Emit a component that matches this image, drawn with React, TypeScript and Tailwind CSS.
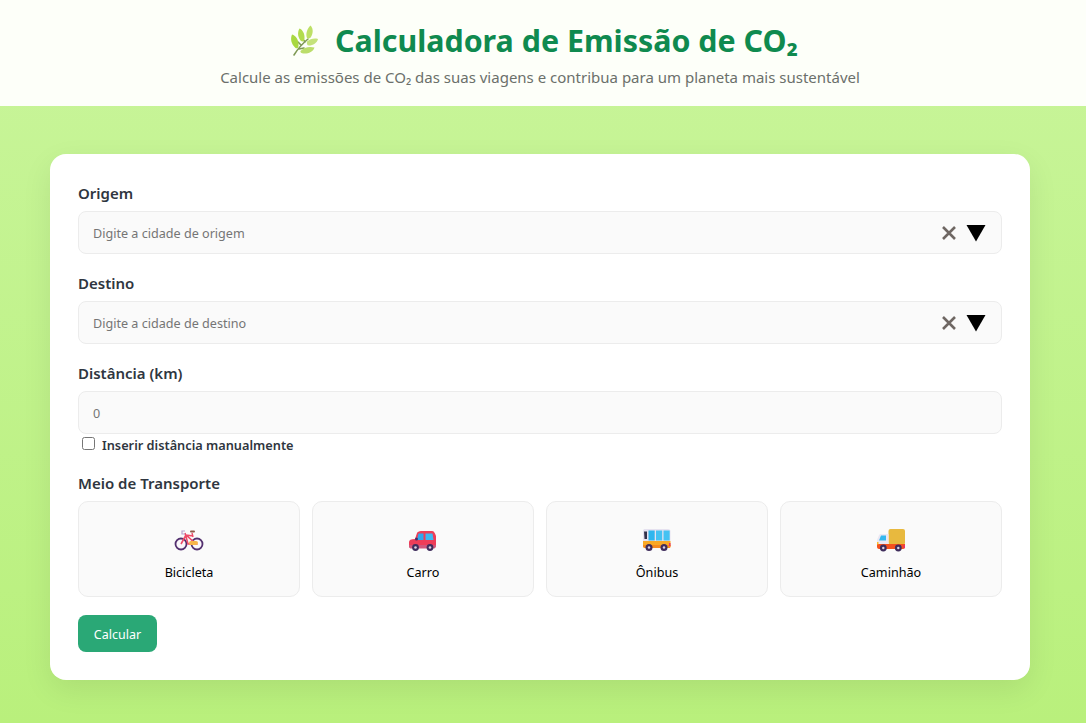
import React from 'react';

const font = { fontFamily: '"Noto Sans", "Open Sans", sans-serif' };

function Herb() {
  return (
    <svg width="30" height="32" viewBox="0 0 30 32" className="shrink-0">
      <path d="M5 30 C8 25 13 19 19 14 M10 24 L15 23 M12 20 L9 17 M16 17 L13 13" stroke="#7f9a55" strokeWidth="1.600" fill="none" strokeLinecap="round" />
      <path d="M3 9.500 C7 10.500 10 15 9.500 21 C9.300 23.500 7.500 24 6 22.500 C2.500 19 1 14 3 9.500Z" fill="#a9d840" />
      <path d="M10.500 3.500 C13.500 4.500 16 9 15.500 13.500 C15.300 16.500 13.500 17 12 16 C9 13 8 7.500 10.500 3.500Z" fill="#b2dc4e" />
      <path d="M21.500 0.500 C24 3 24.500 7 22.500 11 C21.500 13.500 19.500 14 18 13 C16.500 9 18 3.500 21.500 0.500Z" fill="#bde066" />
      <path d="M18 16.500 C21 14 25 13 29 14 C28 18 24 20.500 20 20.500 C18 20.500 17.500 18.500 18 16.500Z" fill="#c4e27a" />
      <path d="M11.500 26 C15 22.500 20 21 25.500 22.500 C24 27 19 29 14.500 28.500 C12.500 28.500 11 27.500 11.500 26Z" fill="#bbdd6a" />
    </svg>
  );
}

function Bike() {
  return (
    <svg width="30" height="24" viewBox="0 0 30 24">
      <circle cx="7" cy="16" r="5.500" fill="#fbf7fb" stroke="#53306f" strokeWidth="1.800" />
      <circle cx="23" cy="16" r="5.500" fill="#fbf7fb" stroke="#53306f" strokeWidth="1.800" />
      <path d="M7 16 L12 7 L22 16 L14 16 L11 5 M12 7 L19 8" stroke="#ee4b68" strokeWidth="1.600" fill="none" />
      <path d="M11 3 L8 3 L8 6 L11 6" stroke="#b7a6cf" strokeWidth="1.200" fill="none" />
      <rect x="16" y="2.500" width="5" height="2" rx="1" fill="#8f5a48" />
      <path d="M18 5 L19 9" stroke="#ee4b68" strokeWidth="1.400" />
      <rect x="15" y="13" width="9" height="4" rx="2" fill="#f7b54a" />
    </svg>
  );
}

function Car() {
  return (
    <svg width="30" height="24" viewBox="0 0 30 24">
      <path d="M1 14 C1 12 3 11 7 11 L9 5 C9.500 4 11 3 13 3 L24 3 C26 3 27 5 28 8 L28 17 C28 19 27 20 26 20 L3 20 C1 20 1 18 1 17Z" fill="#ee3d58" />
      <path d="M1 17 L28 17 C28 19 27 20.500 26 20.500 L3 20.500 C1 20.500 1 18 1 17Z" fill="#d0577c" />
      <path d="M9 12 L10.500 5.500 L15.500 5.500 L15.500 12Z" fill="#2fa8ee" />
      <path d="M17.500 5.500 L24.500 5.500 L25.500 12 L17.500 12Z" fill="#3db9f2" />
      <circle cx="8.500" cy="11" r="1.500" fill="#43306a" />
      <circle cx="7.500" cy="19.500" r="3.400" fill="#3f2d5c" />
      <circle cx="7.500" cy="19.500" r="1.300" fill="#d9d3e3" />
      <circle cx="22" cy="19.500" r="3.400" fill="#3f2d5c" />
      <circle cx="22" cy="19.500" r="1.300" fill="#d9d3e3" />
    </svg>
  );
}

function Bus() {
  return (
    <svg width="30" height="24" viewBox="0 0 30 24">
      <path d="M1 3 C1 1.500 2 1 3 1 L26 1 C27.500 1 28.500 2 28.500 3 L28.500 13 L1 13Z" fill="#e6e2f0" />
      <path d="M1 13 L28.500 13 L28.500 18 C28.500 19 28 20 27 20 L3 20 C2 20 1 19 1 18Z" fill="#f9a825" />
      <path d="M1 17 L28.500 17 L28.500 18 C28.500 19 28 20 27 20 L3 20 C2 20 1 19 1 18Z" fill="#f58a1f" />
      <path d="M2 3.500 L5 3.500 L5 11 L2.500 11Z" fill="#33324a" />
      <rect x="6.500" y="2.500" width="6.200" height="10" fill="#2fb6ee" />
      <rect x="14" y="2.500" width="6.200" height="10" fill="#45c2f2" />
      <rect x="21.500" y="2.500" width="6.200" height="10" fill="#45c2f2" />
      <rect x="27" y="15" width="1.500" height="3" fill="#e8316b" />
      <circle cx="7" cy="19.500" r="3.500" fill="#3f2d5c" />
      <circle cx="7" cy="19.500" r="1.200" fill="#d9d3e3" />
      <circle cx="22" cy="19.500" r="3.500" fill="#3f2d5c" />
      <circle cx="22" cy="19.500" r="1.200" fill="#d9d3e3" />
    </svg>
  );
}

function Truck() {
  return (
    <svg width="30" height="24" viewBox="0 0 30 24">
      <rect x="12.500" y="1" width="16.500" height="16" rx="2" fill="#e8b93e" />
      <path d="M1 12 L3 7 C3.500 6 4 6 5 6 L12.500 6 L12.500 16 L1 16Z" fill="#ebe7f3" />
      <path d="M3 12.500 L5 7.500 L10 7.500 L10 12.500Z" fill="#35b8ee" />
      <path d="M1 16 L29 16 L29 19 C29 20 28.500 21 27 21 L3 21 C2 21 1 20 1 19Z" fill="#f4511e" />
      <rect x="1" y="14" width="1.500" height="2.500" fill="#fbc02d" />
      <rect x="27.500" y="17" width="1.500" height="3" fill="#e8316b" />
      <circle cx="7.300" cy="20" r="3.400" fill="#3f2d5c" />
      <circle cx="7.300" cy="20" r="1.200" fill="#d9d3e3" />
      <circle cx="22.300" cy="20" r="3.400" fill="#3f2d5c" />
      <circle cx="22.300" cy="20" r="1.200" fill="#d9d3e3" />
    </svg>
  );
}

function CityField({ label, placeholder }: { label: string; placeholder: string }) {
  return (
    <div className="mb-[18px]">
      <label className="block mb-[7px] h-[22px] leading-[22px] text-[15px] font-semibold text-[#2f3640]">{label}</label>
      <div className="h-[43px] flex items-center bg-[#fafafa] border border-[#ececec] rounded-lg pl-[14px] pr-[15px]">
        <span className="flex-1 pt-[3px] text-[12.600px] text-[#757575]">{placeholder}</span>
        <svg width="16" height="16" viewBox="0 0 16 16" className="mr-[9px]">
          <path d="M2 2 L14 14 M14 2 L2 14" stroke="#6f6763" strokeWidth="2.600" />
        </svg>
        <svg width="20" height="18" viewBox="0 0 20 18">
          <path d="M0.500 1 L19.500 1 L10 17.500Z" fill="#000" />
        </svg>
      </div>
    </div>
  );
}

const transports = [
  { name: 'Bicicleta', Icon: Bike },
  { name: 'Carro', Icon: Car },
  { name: 'Ônibus', Icon: Bus },
  { name: 'Caminhão', Icon: Truck },
];

export default function App() {
  return (
    <div className="min-h-screen bg-gradient-to-b from-[#c9f59b] to-[#b9f07c]" style={font}>
      {/* Header */}
      <header className="h-[106px] bg-[#fdfff9] flex flex-col items-center pt-[19px] pr-[6px]">
        <div className="flex items-center h-[44px] ml-[7px]">
          <Herb />
          <h1 className="ml-[16px] text-[30.400px] leading-[44px] font-bold text-[#0f8a4f]">Calculadora de Emissão de CO₂</h1>
        </div>
        <p className="mt-[2px] text-[15px] leading-[24px] text-[#6b706b]">
          Calcule as emissões de CO₂ das suas viagens e contribua para um planeta mais sustentável
        </p>
      </header>

      <main className="pl-[50px] pr-[56px] pt-[48px] pb-[43px]">
        <div className="bg-white rounded-2xl p-[28px] shadow-[0_10px_30px_rgba(0,0,0,0.08)]">
          <CityField label="Origem" placeholder="Digite a cidade de origem" />
          <CityField label="Destino" placeholder="Digite a cidade de destino" />

          <div className="mb-[17px]">
            <label className="block mb-[7px] h-[22px] leading-[22px] text-[15px] font-semibold text-[#2f3640]">Distância (km)</label>
            <div className="h-[43px] flex items-center bg-[#fafafa] border border-[#ececec] rounded-lg px-[14px]">
              <span className="pt-[3px] text-[12.600px] text-[#757575]">0</span>
            </div>
            <div className="flex items-start h-[20px] mt-px pl-[4px]">
              <span className="mt-[2px] w-[13px] h-[13px] border border-[#767676] rounded-[2.500px] bg-white" />
              <span className="ml-[7px] text-[12.750px] leading-[20px] font-semibold text-[#2f3640]">Inserir distância manualmente</span>
            </div>
          </div>

          <div className="mb-[18px]">
            <label className="block mb-[7px] h-[22px] leading-[22px] text-[15px] font-semibold text-[#2f3640]">Meio de Transporte</label>
            <div className="grid grid-cols-4 gap-[12px]">
              {transports.map(({ name, Icon }) => (
                <div key={name} className="h-[96px] flex flex-col items-center pt-[26px] bg-[#fafafa] border border-[#ececec] rounded-[10px]">
                  <Icon />
                  <span className="mt-[12px] text-[12.600px] leading-[18px] text-black">{name}</span>
                </div>
              ))}
            </div>
          </div>

          <button className="block w-[79px] h-[37px] pt-[3px] rounded-lg bg-[#2aa876] text-white text-[12.500px]">Calcular</button>
        </div>
      </main>
    </div>
  );
}
